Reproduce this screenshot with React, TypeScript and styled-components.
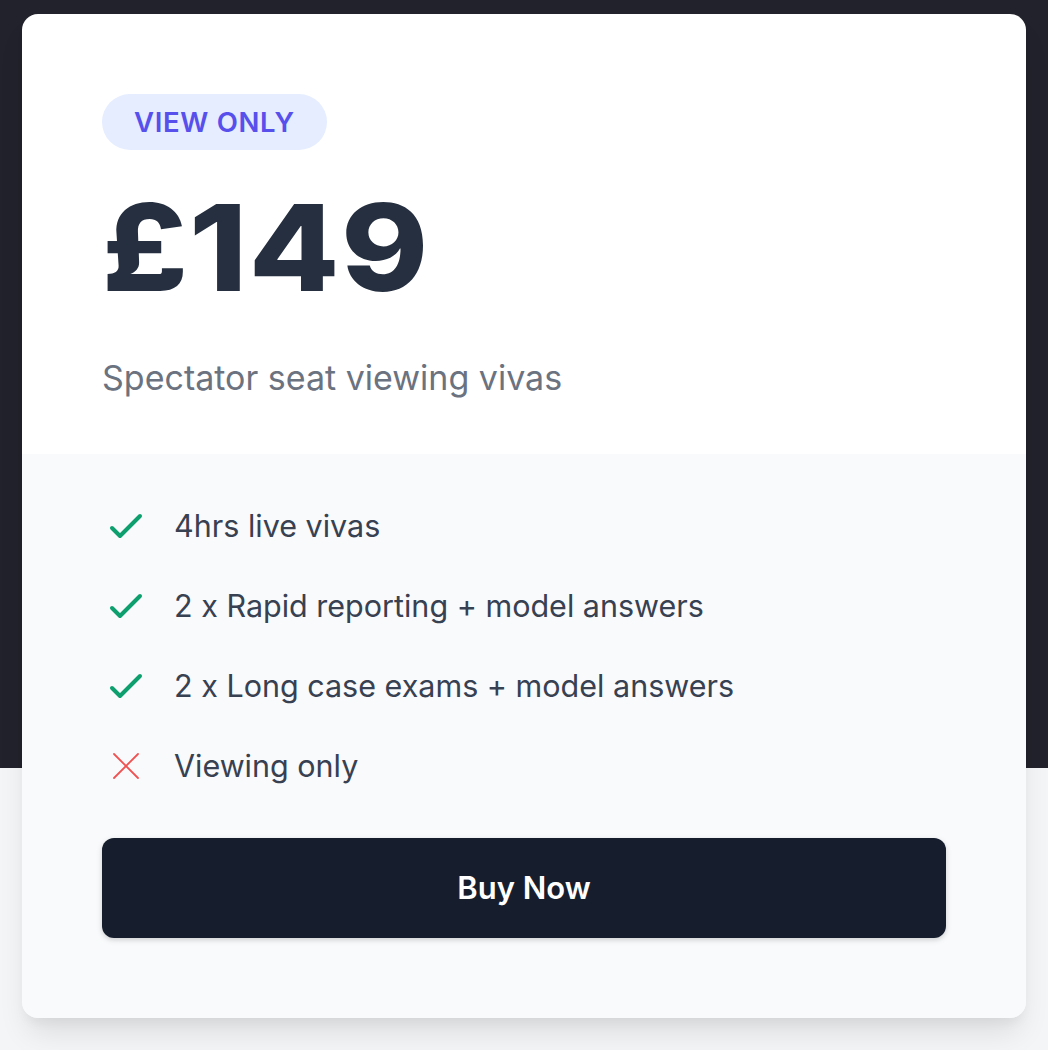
import React from "react";
import styled, { createGlobalStyle } from "styled-components";

const Global = createGlobalStyle`
  html, body { margin: 0; padding: 0; }
  body {
    font-family: Inter, "Noto Sans", "Liberation Sans", sans-serif;
    -webkit-font-smoothing: antialiased;
  }
  * { box-sizing: border-box; }
`;

const Page = styled.div`
  min-height: 1050px;
  padding: 14px 22px 32px;
  background: linear-gradient(to bottom, #22222c 0, #22222c 768px, #f4f5f7 768px, #f4f5f7 100%);
`;

const Card = styled.div`
  width: 1004px;
  border-radius: 16px;
  overflow: hidden;
  box-shadow: 0 20px 30px -6px rgba(0, 0, 0, 0.1), 0 8px 12px -4px rgba(0, 0, 0, 0.05);
  display: flex;
  flex-direction: column;
`;

const Top = styled.div`
  background: #ffffff;
  padding: 80px 80px 52px;
`;

const Badge = styled.span`
  display: inline-flex;
  padding: 8px 32px;
  border-radius: 9999px;
  background: #e5edff;
  color: #5850ec;
  font-size: 27.5px;
  line-height: 40px;
  font-weight: 600;
  letter-spacing: 0.025em;
  text-transform: uppercase;
`;

const Price = styled.div`
  margin-top: 38px;
  font-size: 120px;
  line-height: 120px;
  font-weight: 800;
  color: #252f3f;
  letter-spacing: 0.01em;
  transform: scaleX(1.1);
  transform-origin: left center;
`;

const Sub = styled.p`
  margin: 46px 0 0;
  font-size: 34px;
  line-height: 48px;
  color: #6b7280;
`;

const Bottom = styled.div`
  background: #f9fafb;
  padding: 48px 80px 80px;
`;

const List = styled.ul`
  list-style: none;
  margin: 0;
  padding: 0;
  display: flex;
  flex-direction: column;
  gap: 32px;
`;

const Item = styled.li`
  display: flex;
  align-items: flex-start;
`;

const IconBox = styled.span`
  flex-shrink: 0;
  width: 48px;
  height: 48px;
  display: flex;
  svg { width: 48px; height: 48px; display: block; }
`;

const ItemText = styled.p`
  margin: 0 0 0 24px;
  font-size: 30.5px;
  line-height: 48px;
  color: #374151;
`;

const Button = styled.a`
  margin-top: 48px;
  display: flex;
  align-items: center;
  justify-content: center;
  padding: 24px 40px;
  border: 2px solid transparent;
  border-radius: 12px;
  background: #161e2e;
  color: #ffffff;
  font-size: 31px;
  line-height: 48px;
  font-weight: 600;
  text-decoration: none;
  box-shadow: 0 2px 6px rgba(0, 0, 0, 0.12), 0 2px 4px rgba(0, 0, 0, 0.06);
`;

const Check = () => (
  <svg viewBox="0 0 24 24" fill="none" stroke="#0e9f6e" strokeWidth={2} strokeLinecap="round" strokeLinejoin="round">
    <path d="M5 13l4 4L19 7" />
  </svg>
);

const Cross = () => (
  <svg viewBox="0 0 24 24" fill="none" stroke="#f05252" strokeWidth={0.9} strokeLinecap="round" strokeLinejoin="round">
    <path d="M6 18L18 6M6 6l12 12" />
  </svg>
);

const features: { text: string; ok: boolean }[] = [
  { text: "4hrs live vivas", ok: true },
  { text: "2 x Rapid reporting + model answers", ok: true },
  { text: "2 x Long case exams + model answers", ok: true },
  { text: "Viewing only", ok: false },
];

export default function App() {
  return (
    <>
      <Global />
      <Page>
        <Card>
          <Top>
            <Badge>View only</Badge>
            <Price>£149</Price>
            <Sub>Spectator seat viewing vivas</Sub>
          </Top>
          <Bottom>
            <List>
              {features.map((f) => (
                <Item key={f.text}>
                  <IconBox>{f.ok ? <Check /> : <Cross />}</IconBox>
                  <ItemText>{f.text}</ItemText>
                </Item>
              ))}
            </List>
            <Button href="#">Buy Now</Button>
          </Bottom>
        </Card>
      </Page>
    </>
  );
}
